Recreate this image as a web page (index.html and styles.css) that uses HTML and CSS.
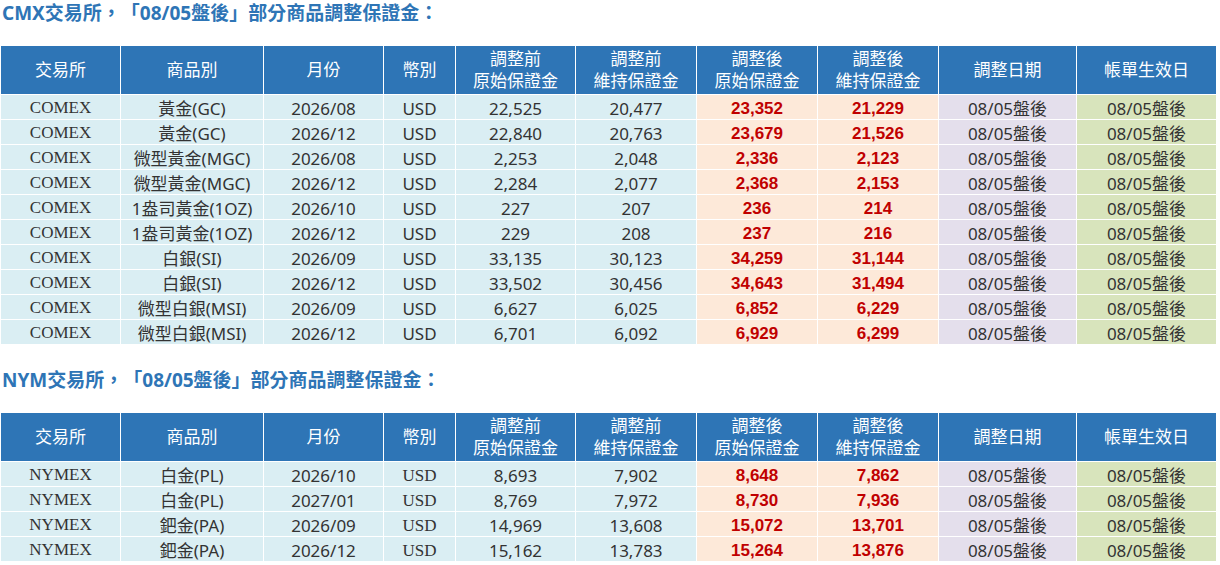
FILE: index.html
```html
<!DOCTYPE html>
<html lang="zh-Hant">
<head>
<meta charset="utf-8">
<title>調整保證金</title>
<link rel="stylesheet" href="styles.css">
</head>
<body>
<h2 class="title">CMX交易所，「08/05盤後」部分商品調整保證金：</h2>
<table class="margin-table">
  <colgroup>
    <col class="w-ex"><col class="w-prod"><col class="w-month"><col class="w-cur">
    <col class="w-num"><col class="w-num2"><col class="w-num2"><col class="w-num2">
    <col class="w-date"><col class="w-bill">
  </colgroup>
  <thead>
    <tr>
      <th>交易所</th><th>商品別</th><th>月份</th><th>幣別</th>
      <th><span class="hl">調整前</span><span class="hl">原始保證金</span></th>
      <th><span class="hl">調整前</span><span class="hl">維持保證金</span></th>
      <th><span class="hl">調整後</span><span class="hl">原始保證金</span></th>
      <th><span class="hl">調整後</span><span class="hl">維持保證金</span></th>
      <th>調整日期</th><th>帳單生效日</th>
    </tr>
  </thead>
  <tbody>
    <tr><td class="ex">COMEX</td><td>黃金(GC)</td><td>2026/08</td><td>USD</td><td>22,525</td><td>20,477</td><td class="red">23,352</td><td class="red">21,229</td><td class="date">08/05盤後</td><td class="bill">08/05盤後</td></tr>
    <tr><td class="ex">COMEX</td><td>黃金(GC)</td><td>2026/12</td><td>USD</td><td>22,840</td><td>20,763</td><td class="red">23,679</td><td class="red">21,526</td><td class="date">08/05盤後</td><td class="bill">08/05盤後</td></tr>
    <tr><td class="ex">COMEX</td><td>微型黃金(MGC)</td><td>2026/08</td><td>USD</td><td>2,253</td><td>2,048</td><td class="red">2,336</td><td class="red">2,123</td><td class="date">08/05盤後</td><td class="bill">08/05盤後</td></tr>
    <tr><td class="ex">COMEX</td><td>微型黃金(MGC)</td><td>2026/12</td><td>USD</td><td>2,284</td><td>2,077</td><td class="red">2,368</td><td class="red">2,153</td><td class="date">08/05盤後</td><td class="bill">08/05盤後</td></tr>
    <tr><td class="ex">COMEX</td><td>1盎司黃金(1OZ)</td><td>2026/10</td><td>USD</td><td>227</td><td>207</td><td class="red">236</td><td class="red">214</td><td class="date">08/05盤後</td><td class="bill">08/05盤後</td></tr>
    <tr><td class="ex">COMEX</td><td>1盎司黃金(1OZ)</td><td>2026/12</td><td>USD</td><td>229</td><td>208</td><td class="red">237</td><td class="red">216</td><td class="date">08/05盤後</td><td class="bill">08/05盤後</td></tr>
    <tr><td class="ex">COMEX</td><td>白銀(SI)</td><td>2026/09</td><td>USD</td><td>33,135</td><td>30,123</td><td class="red">34,259</td><td class="red">31,144</td><td class="date">08/05盤後</td><td class="bill">08/05盤後</td></tr>
    <tr><td class="ex">COMEX</td><td>白銀(SI)</td><td>2026/12</td><td>USD</td><td>33,502</td><td>30,456</td><td class="red">34,643</td><td class="red">31,494</td><td class="date">08/05盤後</td><td class="bill">08/05盤後</td></tr>
    <tr><td class="ex">COMEX</td><td>微型白銀(MSI)</td><td>2026/09</td><td>USD</td><td>6,627</td><td>6,025</td><td class="red">6,852</td><td class="red">6,229</td><td class="date">08/05盤後</td><td class="bill">08/05盤後</td></tr>
    <tr><td class="ex">COMEX</td><td>微型白銀(MSI)</td><td>2026/12</td><td>USD</td><td>6,701</td><td>6,092</td><td class="red">6,929</td><td class="red">6,299</td><td class="date">08/05盤後</td><td class="bill">08/05盤後</td></tr>
  </tbody>
</table>

<h2 class="title title-second">NYM交易所，「08/05盤後」部分商品調整保證金：</h2>
<table class="margin-table">
  <colgroup>
    <col class="w-ex"><col class="w-prod"><col class="w-month"><col class="w-cur">
    <col class="w-num"><col class="w-num2"><col class="w-num2"><col class="w-num2">
    <col class="w-date"><col class="w-bill">
  </colgroup>
  <thead>
    <tr>
      <th>交易所</th><th>商品別</th><th>月份</th><th>幣別</th>
      <th><span class="hl">調整前</span><span class="hl">原始保證金</span></th>
      <th><span class="hl">調整前</span><span class="hl">維持保證金</span></th>
      <th><span class="hl">調整後</span><span class="hl">原始保證金</span></th>
      <th><span class="hl">調整後</span><span class="hl">維持保證金</span></th>
      <th>調整日期</th><th>帳單生效日</th>
    </tr>
  </thead>
  <tbody>
    <tr><td class="ex">NYMEX</td><td>白金(PL)</td><td>2026/10</td><td class="cur-serif">USD</td><td>8,693</td><td>7,902</td><td class="red">8,648</td><td class="red">7,862</td><td class="date">08/05盤後</td><td class="bill">08/05盤後</td></tr>
    <tr><td class="ex">NYMEX</td><td>白金(PL)</td><td>2027/01</td><td class="cur-serif">USD</td><td>8,769</td><td>7,972</td><td class="red">8,730</td><td class="red">7,936</td><td class="date">08/05盤後</td><td class="bill">08/05盤後</td></tr>
    <tr><td class="ex">NYMEX</td><td>鈀金(PA)</td><td>2026/09</td><td class="cur-serif">USD</td><td>14,969</td><td>13,608</td><td class="red">15,072</td><td class="red">13,701</td><td class="date">08/05盤後</td><td class="bill">08/05盤後</td></tr>
    <tr><td class="ex">NYMEX</td><td>鈀金(PA)</td><td>2026/12</td><td class="cur-serif">USD</td><td>15,162</td><td>13,783</td><td class="red">15,264</td><td class="red">13,876</td><td class="date">08/05盤後</td><td class="bill">08/05盤後</td></tr>
  </tbody>
</table>
</body>
</html>
```

FILE: styles.css
```css
html, body {
  margin: 0;
  padding: 0;
  background: #ffffff;
}

body {
  font-family: "Noto Sans", "Noto Sans CJK TC", sans-serif;
  color: #333333;
}

.title {
  margin: 0 0 19px 2px;
  font-size: 19px;
  line-height: 26px;
  font-weight: 700;
  color: #2e75b6;
  font-family: "Noto Sans", "Noto Sans CJK TC", sans-serif;
  text-spacing-trim: space-all;
  font-feature-settings: "halt" 0, "chws" 0;
}

.title-second {
  margin-top: 22px;
}

.margin-table {
  border-collapse: separate;
  border-spacing: 1px;
  table-layout: fixed;
  width: 1217px;
}

.w-ex { width: 119px; }
.w-prod { width: 142px; }
.w-month { width: 119px; }
.w-cur { width: 71px; }
.w-num { width: 119px; }
.w-num2 { width: 120px; }
.w-date { width: 137px; }
.w-bill { width: 139px; }

.margin-table th {
  background: #2e75b6;
  color: #ffffff;
  font-weight: 400;
  font-size: 17px;
  line-height: 22px;
  height: 46px;
  padding: 2px 0 0;
  text-align: center;
  vertical-align: middle;
  font-family: "Liberation Sans", "Noto Sans CJK TC", sans-serif;
}

.margin-table th .hl {
  display: block;
  height: 22px;
  line-height: 22px;
}

.margin-table td {
  background: #daeef3;
  height: 20px;
  padding: 4px 0 0;
  font-size: 17px;
  line-height: 20px;
  text-align: center;
  vertical-align: middle;
  color: #333333;
  white-space: nowrap;
}

.margin-table td.ex {
  font-family: "Liberation Serif", serif;
  padding: 3px 0 1px;
}

.margin-table td.cur-serif {
  font-family: "Liberation Serif", serif;
}

.margin-table td.red {
  background: #fde9d9;
  color: #c00000;
  font-family: "Liberation Sans", sans-serif;
  font-weight: 700;
}

.margin-table td.date {
  background: #e4dfec;
}

.margin-table td.bill {
  background: #d8e4bc;
}
```
